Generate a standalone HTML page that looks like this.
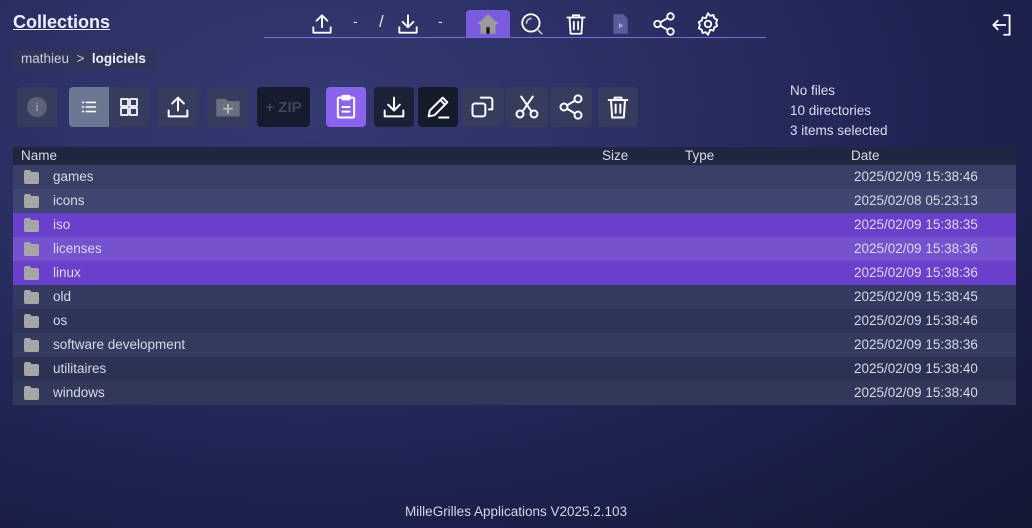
<!DOCTYPE html>
<html><head><meta charset="utf-8"><style>
*{box-sizing:border-box;margin:0;padding:0}
body{width:1032px;height:528px;overflow:hidden;font-family:"Liberation Sans",sans-serif;color:#e4e4ee;
background:radial-gradient(ellipse at 30% 20%,#343a72 0%,#2a2f62 35%,#1d2250 65%,#131733 100%);position:relative}
.a{position:absolute}
.btn{position:absolute;top:87px;height:40px;border-radius:4px;display:flex;align-items:center;justify-content:center}
.btn svg{width:28px;height:28px;fill:none;stroke:#fff;stroke-width:1.7;stroke-linecap:round;stroke-linejoin:round}
.nav svg{position:absolute;top:11px;width:26px;height:26px;fill:none;stroke:#fff;stroke-width:1.7;stroke-linecap:round;stroke-linejoin:round}
.row{position:absolute;left:13px;width:1003px;height:24px;font-size:13.5px;line-height:24px;color:#d8dae6}
.row .n{position:absolute;left:40px}
.row .d{position:absolute;left:841px}
.row .f{position:absolute;left:11px;top:7px;width:15px;height:12px;background:#a6a6a6;border-radius:2px}
.row .f:before{content:"";position:absolute;left:0;top:-2px;width:7px;height:3px;background:#a6a6a6;border-radius:2px 2px 0 0}
</style></head><body>
<div class="a" style="left:13px;top:12px;font-size:18px;font-weight:bold;text-decoration:underline;color:#eef">Collections</div>
<div class="a" style="left:264px;top:37px;width:502px;height:1px;background:#7b6ad8"></div>
<div class="a" style="left:466px;top:10px;width:44px;height:27px;background:#7b5ce0;border-radius:4px 4px 0 0"></div>
<div class="nav">
<svg style="left:309px" viewBox="0 0 24 24"><path d="M4 15v5h16v-5M12 15V4M7 9l5-5 5 5"/></svg>
<div class="a" style="left:353px;top:13px;font-size:14px">-</div>
<div class="a" style="left:379px;top:12px;font-size:17px">/</div>
<svg style="left:395px" viewBox="0 0 24 24"><path d="M4 15v5h16v-5M12 4v11M7 10l5 5 5-5"/></svg>
<div class="a" style="left:438px;top:13px;font-size:14px">-</div>
<svg style="left:475px;stroke:none;fill:#9a9a9a" viewBox="0 0 24 24"><path d="M12 3 2 12h3v9h14v-9h3z"/><rect x="10.5" y="15" width="3" height="6" fill="#111"/></svg>
<svg style="left:519px" viewBox="0 0 24 24"><circle cx="11" cy="11" r="8"/><path d="M17 17l4 4M7 11a4 4 0 0 1 4-4" stroke="#bbb"/></svg>
<svg style="left:563px" viewBox="0 0 24 24"><path d="M4 6h16M9 6V4h6v2M6 6l1 15h10l1-15M10 10v7M14 10v7"/></svg>
<svg style="left:607px;stroke:none;fill:#5a5ca0" viewBox="0 0 24 24"><path d="M6 3h9l4 4v14H6z"/><path d="M11 11l4 2.5-4 2.5z" fill="#aab"/></svg>
<svg style="left:651px" viewBox="0 0 24 24"><circle cx="18" cy="5" r="3"/><circle cx="6" cy="12" r="3"/><circle cx="18" cy="19" r="3"/><path d="M8.6 13.5l6.8 4M15.4 6.5l-6.8 4"/></svg>
<svg style="left:695px" viewBox="0 0 24 24"><circle cx="12" cy="12" r="3"/><path d="M12 2l2 2.5 3-.8.8 3 2.7 1.3-1 2.9 1 2.9-2.7 1.3-.8 3-3-.8L12 22l-2-2.5-3 .8-.8-3-2.7-1.3 1-2.9-1-2.9 2.7-1.3.8-3 3 .8z"/></svg>
<svg style="left:989px;top:12px" viewBox="0 0 24 24"><path d="M14 3h5v18h-5M15 12H4M8 8l-4 4 4 4"/></svg>
</div>
<div class="a" style="left:13px;top:50px;width:144px;height:19px;background:#2f3559;border-radius:2px"></div>
<div class="a" style="left:21px;top:51px;font-size:13.5px;color:#ccd">mathieu &nbsp;&gt;&nbsp; <b style="color:#eef">logiciels</b></div>

<div class="btn" style="left:17px;width:40px;background:#353c5e"><div style="width:20px;height:20px;border-radius:50%;background:#5c6278;color:#aaa;font-size:13px;text-align:center;line-height:20px;font-family:'Liberation Serif'">i</div></div>
<div class="btn" style="left:69px;width:40px;background:#6b7894;border-radius:4px 0 0 4px"><svg viewBox="0 0 24 24" style="width:22px"><path d="M9 7h10M9 12h10M9 17h10M5 7h1M5 12h1M5 17h1"/></svg></div>
<div class="btn" style="left:109px;width:40px;background:#353c5e;border-radius:0 4px 4px 0"><svg viewBox="0 0 24 24" style="width:24px"><rect x="4" y="4" width="7" height="7"/><rect x="13" y="4" width="7" height="7"/><rect x="4" y="13" width="7" height="7"/><rect x="13" y="13" width="7" height="7"/></svg></div>
<div class="btn" style="left:157px;width:42px;background:#353c5e"><svg viewBox="0 0 24 24"><path d="M4 15v5h16v-5M12 15V4M7 9l5-5 5 5"/></svg></div>
<div class="btn" style="left:207px;width:42px;background:#353c5e"><svg viewBox="0 0 24 24" style="stroke:none;fill:#6a7080"><path d="M2 5h8l2 2h10v13H2z"/><path d="M12 10v7M8.5 13.5h7" stroke="#bbb" stroke-width="1.6"/></svg></div>
<div class="btn" style="left:257px;width:53px;background:#161c2e;font-size:15px;font-weight:bold;color:#3e4660">+ ZIP</div>
<div class="btn" style="left:326px;width:40px;background:#8b63ee"><svg viewBox="0 0 24 24"><rect x="5" y="4" width="14" height="17" rx="1"/><rect x="9" y="2.5" width="6" height="3"/><path d="M9 12h6M9 16h6"/></svg></div>
<div class="btn" style="left:374px;width:40px;background:#1c2236"><svg viewBox="0 0 24 24"><path d="M4 15v5h16v-5M12 4v11M7 10l5 5 5-5"/></svg></div>
<div class="btn" style="left:418px;width:40px;background:#161b2c"><svg viewBox="0 0 24 24"><path d="M4 20l1-5L16 4l4 4L9 19zM14 6l4 4M13 21h8"/></svg></div>
<div class="btn" style="left:462px;width:42px;background:#353c5e"><svg viewBox="0 0 24 24"><rect x="3" y="9" width="11" height="11" rx="2"/><path d="M10 4h8a2 2 0 0 1 2 2v8h-3"/></svg></div>
<div class="btn" style="left:506px;width:42px;background:#353c5e"><svg viewBox="0 0 24 24"><circle cx="6" cy="18" r="3"/><circle cx="18" cy="18" r="3"/><path d="M8 16L17 3M16 16L7 3"/></svg></div>
<div class="btn" style="left:550px;width:42px;background:#353c5e"><svg viewBox="0 0 24 24"><circle cx="18" cy="5" r="3"/><circle cx="6" cy="12" r="3"/><circle cx="18" cy="19" r="3"/><path d="M8.6 13.5l6.8 4M15.4 6.5l-6.8 4"/></svg></div>
<div class="btn" style="left:598px;width:40px;background:#353c5e"><svg viewBox="0 0 24 24"><path d="M4 6h16M9 6V4h6v2M6 6l1 15h10l1-15M10 10v7M14 10v7"/></svg></div>

<div class="a" style="left:790px;top:81px;font-size:13.5px;line-height:20px;color:#dde">No files<br>10 directories<br>3 items selected</div>

<div class="a" style="left:13px;top:147px;width:1003px;height:18px;background:#1f2740;font-size:13.5px;line-height:17px;color:#d8dae6">
<span class="a" style="left:8px">Name</span><span class="a" style="left:589px">Size</span><span class="a" style="left:672px">Type</span><span class="a" style="left:838px">Date</span></div>

<div class="row" style="top:165px;background:#373f66"><div class="f"></div><span class="n">games</span><span class="d">2025/02/09 15:38:46</span></div>
<div class="row" style="top:189px;background:#3e4770"><div class="f"></div><span class="n">icons</span><span class="d">2025/02/08 05:23:13</span></div>
<div class="row" style="top:213px;background:#6a3fcc"><div class="f"></div><span class="n">iso</span><span class="d">2025/02/09 15:38:35</span></div>
<div class="row" style="top:237px;background:#7553cf"><div class="f"></div><span class="n">licenses</span><span class="d">2025/02/09 15:38:36</span></div>
<div class="row" style="top:261px;background:#6a3fcc"><div class="f"></div><span class="n">linux</span><span class="d">2025/02/09 15:38:36</span></div>
<div class="row" style="top:285px;background:#333b60"><div class="f"></div><span class="n">old</span><span class="d">2025/02/09 15:38:45</span></div>
<div class="row" style="top:309px;background:#2d3457"><div class="f"></div><span class="n">os</span><span class="d">2025/02/09 15:38:46</span></div>
<div class="row" style="top:333px;background:#333b5e"><div class="f"></div><span class="n">software development</span><span class="d">2025/02/09 15:38:36</span></div>
<div class="row" style="top:357px;background:#2b3254"><div class="f"></div><span class="n">utilitaires</span><span class="d">2025/02/09 15:38:40</span></div>
<div class="row" style="top:381px;background:#313859"><div class="f"></div><span class="n">windows</span><span class="d">2025/02/09 15:38:40</span></div>

<div class="a" style="left:0;width:1032px;top:504px;text-align:center;font-size:13.5px;color:#d4d6e4">MilleGrilles Applications V2025.2.103</div>
</body></html>
